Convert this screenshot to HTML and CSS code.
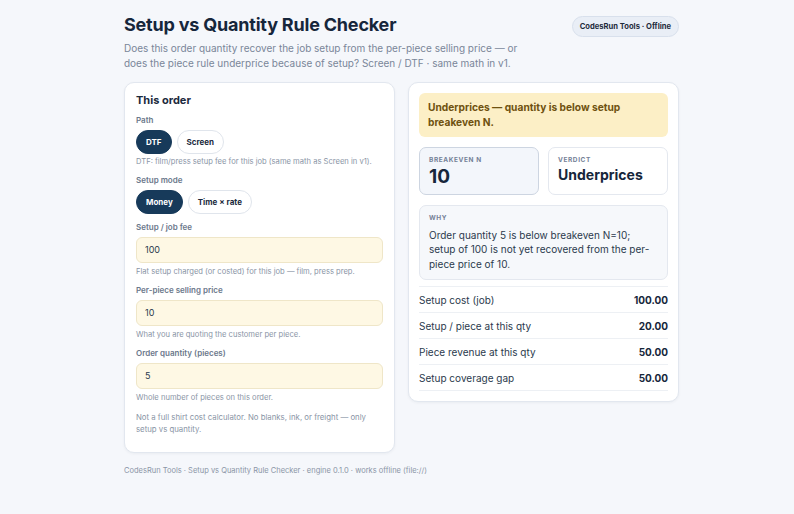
FILE: index.html
```html
<!DOCTYPE html>
<html lang="en">
<head>
  <meta charset="UTF-8">
  <meta name="viewport" content="width=device-width, initial-scale=1.0">
  <title>Setup vs Quantity Rule Checker</title>
  <link rel="stylesheet" href="styles.css">
</head>
<body>
  <div class="wrap">
    <header class="top">
      <div>
        <h1>Setup vs Quantity Rule Checker</h1>
        <p class="lede">Does this order quantity recover the job setup from the per-piece selling price — or does the piece rule underprice because of setup? Screen / DTF · same math in v1.</p>
      </div>
      <span class="badge">CodesRun Tools · Offline</span>
    </header>

    <main class="grid">
      <!-- Inputs -->
      <section class="card">
        <h2>This order</h2>

        <div class="label">Path</div>
        <div class="pills">
          <button class="pill on">DTF</button>
          <button class="pill">Screen</button>
        </div>
        <p class="hint">DTF: film/press setup fee for this job (same math as Screen in v1).</p>

        <div class="label">Setup mode</div>
        <div class="pills last">
          <button class="pill on">Money</button>
          <button class="pill">Time × rate</button>
        </div>

        <label class="label" for="fee">Setup / job fee</label>
        <input id="fee" class="field" value="100">
        <p class="hint">Flat setup charged (or costed) for this job — film, press prep.</p>

        <label class="label" for="price">Per-piece selling price</label>
        <input id="price" class="field" value="10">
        <p class="hint">What you are quoting the customer per piece.</p>

        <label class="label" for="qty">Order quantity (pieces)</label>
        <input id="qty" class="field" value="5">
        <p class="hint">Whole number of pieces on this order.</p>

        <p class="note">Not a full shirt cost calculator. No blanks, ink, or freight — only setup vs quantity.</p>
      </section>

      <!-- Result -->
      <section class="card result">
        <div class="banner">Underprices — quantity is below setup breakeven N.</div>

        <div class="stats">
          <div class="stat hi">
            <div class="cap">Breakeven N</div>
            <div class="big">10</div>
          </div>
          <div class="stat">
            <div class="cap">Verdict</div>
            <div class="verdict">Underprices</div>
          </div>
        </div>

        <div class="why">
          <div class="cap">Why</div>
          <p>Order quantity 5 is below breakeven N=10; setup of 100 is not yet recovered from the per-piece price of 10.</p>
        </div>

        <table class="rows">
          <tr><td>Setup cost (job)</td><td>100.00</td></tr>
          <tr><td>Setup / piece at this qty</td><td>20.00</td></tr>
          <tr><td>Piece revenue at this qty</td><td>50.00</td></tr>
          <tr><td>Setup coverage gap</td><td>50.00</td></tr>
        </table>
      </section>
    </main>

    <footer class="foot">CodesRun Tools · Setup vs Quantity Rule Checker · engine 0.1.0 · works offline (file://)</footer>
  </div>
</body>
</html>
```

FILE: styles.css
```css
* {
  margin: 0;
  padding: 0;
  box-sizing: border-box;
}

body {
  background-color: #f5f7fb;
  color: #1b2a3d;
  font-family: Inter, "Noto Sans", sans-serif;
}

.wrap {
  width: 555px;
  margin-left: 124px;
  padding-top: 14px;
}

/* Header */
.top {
  display: flex;
  justify-content: space-between;
  align-items: flex-start;
}

h1 {
  font-size: 18px;
  line-height: 22px;
  font-weight: 700;
  color: #16263b;
  letter-spacing: -0.2px;
}

.lede {
  margin-top: 4.5px;
  max-width: 410px;
  font-size: 10px;
  line-height: 15px;
  color: #7a8699;
}

.badge {
  margin-top: 2px;
  padding: 4px 7px;
  font-size: 7.6px;
  line-height: 11px;
  font-weight: 700;
  color: #1e2b3c;
  background-color: #e9eef6;
  border: 1px solid #d8e0ec;
  border-radius: 11px;
  white-space: nowrap;
}

/* Layout */
.grid {
  display: grid;
  grid-template-columns: 1fr 1fr;
  gap: 13px;
  align-items: start;
  margin-top: 11.5px;
}

.card {
  background-color: #fff;
  border: 1px solid #e2e7ef;
  border-radius: 10px;
  padding: 9px 11px 17px;
  box-shadow: 0 1px 3px rgba(20, 35, 60, 0.05);
}

h2 {
  font-size: 11px;
  line-height: 16px;
  font-weight: 700;
  color: #1b2a3d;
  margin-bottom: 6.5px;
}

.label {
  display: block;
  font-size: 8px;
  line-height: 11px;
  font-weight: 600;
  color: #6b788b;
  margin-bottom: 4px;
}

.pills {
  display: flex;
  gap: 5px;
  margin-bottom: 2px;
}

.pills.last {
  margin-bottom: 8px;
}

.pill {
  font-family: inherit;
  font-size: 8px;
  font-weight: 700;
  height: 24px;
  padding: 0 9px;
  border-radius: 12px;
  border: 1px solid #e0e5ec;
  background-color: #fff;
  color: #1b2a3d;
}

.pill.on {
  background-color: #173a5a;
  border-color: #173a5a;
  color: #fff;
}

.hint {
  font-size: 7.6px;
  line-height: 11px;
  color: #8a95a6;
  margin-bottom: 8px;
}

.field {
  display: block;
  width: 100%;
  height: 26px;
  padding: 0 8px;
  font-family: inherit;
  font-size: 9px;
  color: #2b3a4d;
  background-color: #fef8e4;
  border: 1px solid #efe6c8;
  border-radius: 6px;
  margin-bottom: 3px;
}

.note {
  font-size: 7.8px;
  line-height: 12px;
  color: #8a95a6;
  padding-right: 12px;
}

/* Result side */
.card.result {
  padding: 10px;
}

.banner {
  background-color: #fcefc6;
  color: #6f5210;
  font-size: 10.2px;
  font-weight: 700;
  line-height: 15px;
  padding: 7px 9px;
  border-radius: 6px;
}

.stats {
  display: grid;
  grid-template-columns: 1fr 1fr;
  gap: 9px;
  margin-top: 10px;
}

.stat {
  border: 1px solid #e4e8ef;
  border-radius: 7px;
  padding: 7.5px 9px 0;
  height: 48px;
  background-color: #fff;
}

.stat.hi {
  background-color: #f3f6fb;
  border-color: #cdd5e1;
}

.cap {
  font-size: 6.5px;
  font-weight: 700;
  letter-spacing: 0.6px;
  text-transform: uppercase;
  color: #758197;
  line-height: 9px;
}

.big {
  font-size: 19px;
  font-weight: 700;
  line-height: 24px;
  color: #16263b;
}

.verdict {
  font-size: 14px;
  font-weight: 700;
  line-height: 19px;
  color: #16263b;
}

.why {
  margin-top: 10px;
  background-color: #f6f8fb;
  border: 1px solid #e4e8ef;
  border-radius: 7px;
  padding: 7.5px 9px 8px;
}

.why p {
  margin-top: 5px;
  font-size: 10px;
  line-height: 14.5px;
  color: #2b3a4d;
}

.rows {
  width: 100%;
  border-collapse: collapse;
  margin-top: 6px;
  font-size: 10px;
  color: #2b3a4d;
}

.rows td {
  height: 26px;
  padding: 0;
  border-top: 1px solid #edf0f4;
}

.rows tr:last-child td {
  border-bottom: 1px solid #edf0f4;
}

.rows td:last-child {
  text-align: right;
  font-weight: 700;
  color: #16263b;
}

.foot {
  margin-top: 12px;
  font-size: 7.5px;
  line-height: 11px;
  color: #8a95a6;
}
```
